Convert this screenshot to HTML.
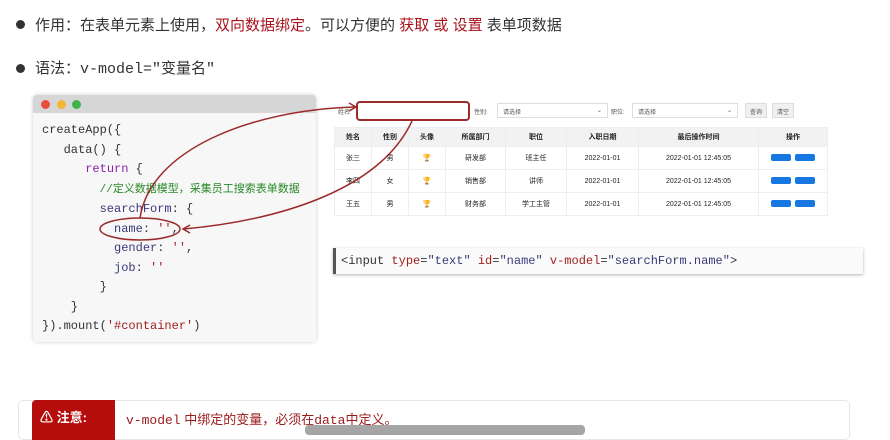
<!DOCTYPE html>
<html><head><meta charset="utf-8"><style>
*{margin:0;padding:0;box-sizing:border-box}
body{width:890px;height:433px;background:#fff;position:relative;overflow:hidden;font-family:"Liberation Sans","Noto Sans CJK SC",sans-serif;color:#333}
.abs{position:absolute}
.dot{position:absolute;width:9px;height:9px;border-radius:50%;background:#333}
.l1{left:35px;top:14px;font-size:15px;color:#333;white-space:pre}
.red{color:#a8121c}
.mono{font-family:"Liberation Mono","Noto Sans CJK SC",monospace}
.code{left:33px;top:95px;width:283px;height:247px;background:#f7f7f7;box-shadow:0 0 4px rgba(0,0,0,.2);border-radius:4px;overflow:hidden}
.bar{height:18px;background:#d6d6d6}
.cl{position:absolute;width:9px;height:9px;border-radius:50%;top:5px}
.code pre{font-family:"Liberation Mono","Noto Sans CJK SC",monospace;font-size:12px;line-height:19.5px;padding:8px 0 0 9px;color:#333}
.k{color:#8a1fa8}.c{color:#2a8a2a;font-size:11px}.v{color:#3a3a7a}.s{color:#a02020}
table{border-collapse:collapse;font-size:7px;position:absolute;left:334px;top:127px;width:494px;color:#222}
td,th{border:1px solid #eee;text-align:center;height:23px}
th{background:#f2f2f2;height:19px;font-weight:bold}
.b{display:inline-block;width:20px;height:7px;background:#1677e0;border-radius:2px;margin:0 2px}
.sel{position:absolute;top:103px;height:15px;border:1px solid #ddd;font-size:6px;padding:3px 5px;color:#555}
</style></head><body>
<div class="dot" style="left:16px;top:20px"></div>
<div class="abs l1">作用：在表单元素上使用，<span class="red">双向数据绑定</span>。可以方便的 <span class="red">获取</span> <span class="red">或</span> <span class="red">设置</span> 表单项数据</div>
<div class="dot" style="left:16px;top:64px"></div>
<div class="abs l1" style="top:57px">语法：<span class="mono">v-model="</span>变量名<span class="mono">"</span></div>

<div class="abs code"><div class="bar"><div class="cl" style="left:8px;background:#e94b3c"></div><div class="cl" style="left:24px;background:#f2b632"></div><div class="cl" style="left:39px;background:#3fb44b"></div></div>
<pre>createApp({
   data() {
      <span class="k">return</span> {
        <span class="c">//定义数据模型，采集员工搜索表单数据</span>
        <span class="v">searchForm</span>: {
          <span class="v">name</span>: <span class="s">''</span>,
          <span class="v">gender</span>: <span class="s">''</span>,
          <span class="v">job</span>: <span class="s">''</span>
        }
    }
}).mount(<span class="s">'#container'</span>)</pre></div>

<div class="abs" style="left:338px;top:107px;font-size:6px;color:#555">姓名:</div>
<div class="abs" style="left:356px;top:101px;width:114px;height:20px;border:2px solid #9b2a2a;border-radius:4px;background:#fff"></div>
<div class="abs" style="left:474px;top:107px;font-size:6px;color:#555">性别:</div>
<div class="sel" style="left:497px;width:111px">请选择<span style="float:right">⌄</span></div>
<div class="abs" style="left:611px;top:107px;font-size:6px;color:#555">职位:</div>
<div class="sel" style="left:632px;width:106px">请选择<span style="float:right">⌄</span></div>
<div class="sel" style="left:745px;width:22px;background:#f0f0f0;padding:3px 4px">查询</div>
<div class="sel" style="left:772px;width:22px;background:#f0f0f0;padding:3px 4px">清空</div>

<table>
<tr><th style="width:37px">姓名</th><th style="width:37px">性别</th><th style="width:37px">头像</th><th style="width:60px">所属部门</th><th style="width:61px">职位</th><th style="width:72px">入职日期</th><th style="width:120px">最后操作时间</th><th>操作</th></tr>
<tr><td>张三</td><td>男</td><td>🏆</td><td>研发部</td><td>班主任</td><td>2022-01-01</td><td>2022-01-01 12:45:05</td><td><span class="b"></span><span class="b"></span></td></tr>
<tr><td>李四</td><td>女</td><td>🏆</td><td>销售部</td><td>讲师</td><td>2022-01-01</td><td>2022-01-01 12:45:05</td><td><span class="b"></span><span class="b"></span></td></tr>
<tr><td>王五</td><td>男</td><td>🏆</td><td>财务部</td><td>学工主管</td><td>2022-01-01</td><td>2022-01-01 12:45:05</td><td><span class="b"></span><span class="b"></span></td></tr>
</table>

<div class="abs mono" style="left:333px;top:248px;width:530px;height:26px;border-left:3px solid #555;box-shadow:0 1px 3px rgba(0,0,0,.3);background:#fafafa;font-size:12px;padding:6px 5px;color:#333;white-space:pre">&lt;input <span class="s">type</span>=<span class="v">"text"</span> <span class="s">id</span>=<span class="v">"name"</span> <span class="s">v-model</span>=<span class="v">"searchForm.name"</span>&gt;</div>

<svg class="abs" style="left:0;top:0" width="890" height="433" fill="none" stroke="#9b2a2a" stroke-width="1.5">
<ellipse cx="140" cy="229" rx="40" ry="11"/>
<path d="M140 218 C150 150 250 110 355 107"/><path d="M349 103 L356 107 L349 111"/>
<path d="M412 121 C380 190 280 220 184 229"/><path d="M190 225 L183 229 L190 233"/>
</svg>

<div class="abs" style="left:18px;top:400px;width:832px;height:40px;border:1px solid #e6e6e6;border-radius:5px"></div>
<div class="abs" style="left:32px;top:400px;width:83px;height:40px;background:#b50c0c;border-radius:4px 0 0 0;color:#fff;font-size:13px;padding:7px 0 0 8px;font-weight:bold">⚠ 注意:</div>
<div class="abs" style="left:126px;top:409px;font-size:13px;color:#9b1a1a"><span class="mono">v-model</span> 中绑定的变量，必须在<span class="mono">data</span>中定义。</div>
<div class="abs" style="left:305px;top:425px;width:280px;height:10px;background:#a5a5a5;border-radius:4px"></div>
</body></html>
